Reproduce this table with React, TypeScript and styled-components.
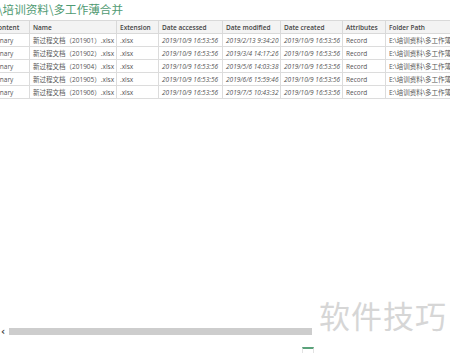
import styled, { createGlobalStyle } from "styled-components";

const GlobalStyle = createGlobalStyle`
  html, body {
    margin: 0;
    padding: 0;
    background: #fff;
  }
`;

const columns = [
  { title: "Content", width: 39 },
  { title: "Name", width: 87 },
  { title: "Extension", width: 42 },
  { title: "Date accessed", width: 64 },
  { title: "Date modified", width: 58 },
  { title: "Date created", width: 62 },
  { title: "Attributes", width: 43 },
  { title: "Folder Path", width: 90 },
];

const rows = [
  { name: "新过程文档（201901）.xlsx", modified: "2019/2/13 9:34:20" },
  { name: "新过程文档（201902）.xlsx", modified: "2019/3/4 14:17:26" },
  { name: "新过程文档（201904）.xlsx", modified: "2019/5/6 14:03:38" },
  { name: "新过程文档（201905）.xlsx", modified: "2019/6/6 15:59:46" },
  { name: "新过程文档（201906）.xlsx", modified: "2019/7/5 10:43:32" },
];

export default function App() {
  return (
    <Page>
      <GlobalStyle />
      <Title>\培训资料\多工作薄合并</Title>
      <TableArea>
        <Table>
          <colgroup>
            {columns.map((c) => (
              <col key={c.title} style={{ width: c.width }} />
            ))}
          </colgroup>
          <thead>
            <tr>
              {columns.map((c) => (
                <Th key={c.title}>{c.title}</Th>
              ))}
            </tr>
          </thead>
          <tbody>
            {rows.map((r) => (
              <tr key={r.name}>
                <Td>Binary</Td>
                <Td>{r.name}</Td>
                <Td>.xlsx</Td>
                <Td $italic>2019/10/9 16:53:56</Td>
                <Td $italic>{r.modified}</Td>
                <Td $italic>2019/10/9 16:53:56</Td>
                <Td>Record</Td>
                <Td>E:\培训资料\多工作薄合并\</Td>
              </tr>
            ))}
          </tbody>
        </Table>
      </TableArea>
      <ScrollRow>
        <Arrow>‹</Arrow>
        <Track />
      </ScrollRow>
      <BottomRow>
        <Tab />
      </BottomRow>
      <Watermark>软件技巧</Watermark>
    </Page>
  );
}

const Page = styled.div`
  position: relative;
  width: 450px;
  height: 353px;
  overflow: hidden;
  display: flex;
  flex-direction: column;
  font-family: "Open Sans", "Noto Sans CJK SC", sans-serif;
`;

const Title = styled.div`
  height: 20px;
  margin-left: -2px;
  font-family: "Noto Sans CJK SC", sans-serif;
  font-size: 11.6px;
  line-height: 18px;
  color: #4f9a72;
  white-space: nowrap;
`;

const TableArea = styled.div`
  flex: 1;
  overflow: hidden;
`;

const Table = styled.table`
  margin-left: -10px;
  border-collapse: collapse;
  table-layout: fixed;
  width: 485px;
`;

const Th = styled.th`
  height: 12px;
  padding: 0 3px;
  background: #f3f3f3;
  border: 1px solid #d9d9d9;
  font-size: 6.5px;
  font-weight: 600;
  color: #444;
  text-align: left;
  white-space: nowrap;
  overflow: hidden;
`;

const Td = styled.td<{ $italic?: boolean }>`
  height: 12px;
  padding: 0 3px;
  border: 1px solid #dcdcdc;
  font-size: 6.5px;
  font-style: ${(p) => (p.$italic ? "italic" : "normal")};
  color: #555;
  white-space: nowrap;
  overflow: hidden;
`;

const ScrollRow = styled.div`
  height: 9px;
  display: flex;
  align-items: center;
  gap: 4px;
  padding-left: 1px;
  margin-bottom: 11px;
`;

const Arrow = styled.span`
  font-family: "DejaVu Sans", sans-serif;
  font-size: 10px;
  font-weight: bold;
  line-height: 9px;
  color: #444;
`;

const Track = styled.div`
  width: 303px;
  height: 7px;
  background: #cdcdcd;
`;

const BottomRow = styled.div`
  height: 6px;
  display: flex;
  padding-left: 302px;
`;

const Tab = styled.div`
  width: 12px;
  height: 6px;
  border-top: 2px solid #5aa27a;
  border-left: 1px solid #e2e2e2;
  border-right: 1px solid #e2e2e2;
  box-sizing: border-box;
`;

const Watermark = styled.div`
  position: absolute;
  left: 319px;
  top: 294px;
  font-family: "Noto Sans CJK SC", sans-serif;
  font-size: 31px;
  line-height: 42px;
  color: #d6d6d6;
  letter-spacing: 1px;
`;
